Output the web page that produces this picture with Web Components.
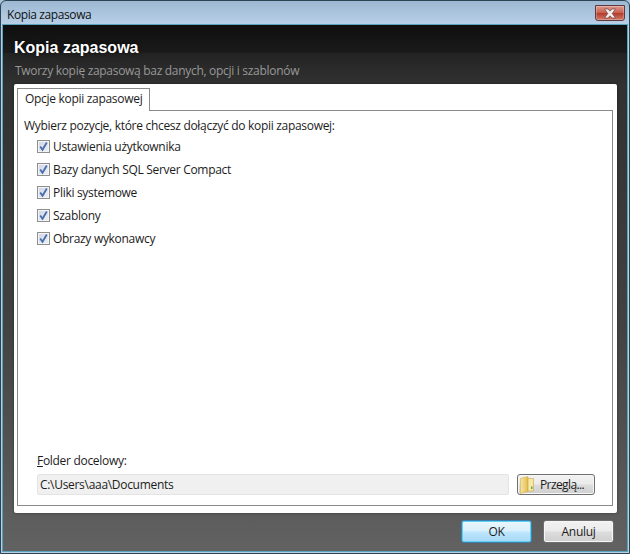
<!DOCTYPE html>
<html lang="pl">
<head>
<meta charset="utf-8">
<title>Kopia zapasowa</title>
<style>
  html, body { margin: 0; height: 100%; background: #a9c4dc; }
  body { font: 12px "Open Sans", "Liberation Sans", sans-serif; color: #1c1c1c; letter-spacing: -0.3px; }
</style>
</head>
<body>
<backup-window>
  <span slot="title">Kopia zapasowa</span>
  <span slot="heading">Kopia zapasowa</span>
  <span slot="subheading">Tworzy kopię zapasową baz danych, opcji i szablonów</span>
  <tab-panel label="Opcje kopii zapasowej">
    <div slot="intro">Wybierz pozycje, które chcesz dołączyć do kopii zapasowej:</div>
    <check-row>Ustawienia użytkownika</check-row>
    <check-row>Bazy danych SQL Server Compact</check-row>
    <check-row>Pliki systemowe</check-row>
    <check-row>Szablony</check-row>
    <check-row>Obrazy wykonawcy</check-row>
    <folder-field slot="footer" path="C:\Users\aaa\Documents"></folder-field>
  </tab-panel>
  <aero-button slot="actions" class="wide" focused>OK</aero-button>
  <aero-button slot="actions" class="wide">Anuluj</aero-button>
</backup-window>

<script>
class BackupWindow extends HTMLElement {
  connectedCallback() {
    this.attachShadow({ mode: 'open' });
    this.shadowRoot.innerHTML = `
      <style>
        :host {
          display: flex;
          flex-direction: column;
          box-sizing: border-box;
          width: 630px;
          height: 554px;
          border: 1px solid #2c4452;
          border-radius: 6px 6px 0 0;
          background: linear-gradient(#9db8d2, #b6cfe7 22px);
          overflow: hidden;
        }
        .titlebar {
          display: flex;
          align-items: flex-start;
          justify-content: space-between;
          height: 24px;
          flex: none;
          padding: 0 4px 0 6px;
          box-sizing: border-box;
        }
        .titlebar .name { line-height: 28px; color: #111; letter-spacing: -0.4px; }
        .close {
          width: 30px;
          height: 16px;
          margin-top: 4px;
          box-sizing: border-box;
          border: 1px solid #5c3a3e;
          border-radius: 0 0 3px 3px;
          background: linear-gradient(#dd9a8e, #c9604f 48%, #b23c2c 52%, #d2796a);
          display: flex;
          align-items: center;
          justify-content: center;
          box-shadow: inset 0 0 0 1px rgba(255,255,255,.25);
        }
        .body {
          flex: 1;
          display: flex;
          flex-direction: column;
          margin: 0 2px 2px 2px;
          padding: 0 10px 0 11px;
          outline: 1px solid #5aa2bc;
          background:
            linear-gradient(rgba(255,255,255,.035), rgba(255,255,255,.035)) 0 28px / 100% 100% no-repeat,
            linear-gradient(#0e0e0e, #2a2a2a 60px, #3b3b3b 300px, #5c5c5c);
        }
        .heading {
          font: bold 16px/20px "Liberation Sans", sans-serif;
          letter-spacing: 0;
          color: #fff;
          padding: 13px 0 0 0;
          text-shadow: 0 0 4px rgba(0,0,0,.8);
        }
        .sub {
          color: #989898;
          line-height: 17px;
          padding: 4px 0 0 1px;
          height: 22px;
        }
        .main { flex: 1; min-height: 0; display: flex; }
        .actions {
          display: flex;
          justify-content: flex-end;
          gap: 11px;
          padding: 7px 3px 8px 0;
          flex: none;
        }
      </style>
      <div class="titlebar">
        <span class="name"><slot name="title"></slot></span>
        <div class="close">
          <svg width="16" height="11" viewBox="0 0 16 11">
            <path d="M2.500 1h3.500l2 2.200L10 1h3.500L10.200 5.500 13.500 10H10L8 7.800 6 10H2.500L5.800 5.500z" fill="#f6f1f1" stroke="#6a4444" stroke-width=".7"/>
          </svg>
        </div>
      </div>
      <div class="body">
        <div class="heading"><slot name="heading"></slot></div>
        <div class="sub"><slot name="subheading"></slot></div>
        <div class="main"><slot></slot></div>
        <div class="actions"><slot name="actions"></slot></div>
      </div>
    `;
  }
}

class TabPanel extends HTMLElement {
  connectedCallback() {
    const label = this.getAttribute('label');
    this.attachShadow({ mode: 'open' });
    this.shadowRoot.innerHTML = `
      <style>
        :host {
          display: flex;
          flex-direction: column;
          flex: 1;
          background: #fff;
          padding: 4px 4px 7px 3px;
          border-radius: 2px;
          box-shadow: 0 0 3px rgba(0,0,0,.4);
        }
        .tab {
          align-self: flex-start;
          box-sizing: border-box;
          height: 23px;
          padding: 0 7px;
          line-height: 20px;
          border: 1px solid #8a8a8a;
          border-bottom: 0;
          background: #fff;
          position: relative;
          margin-bottom: -1px;
          z-index: 1;
        }
        .page {
          flex: 1;
          display: flex;
          flex-direction: column;
          border: 1px solid #8a8a8a;
          padding: 6px 6px 10px 6px;
        }
        .list { display: flex; flex-direction: column; gap: 6px; padding: 4px 0 0 13px; }
        .spacer { flex: 1; }
      </style>
      <div class="tab">${label}</div>
      <div class="page">
        <slot name="intro"></slot>
        <div class="list"><slot></slot></div>
        <div class="spacer"></div>
        <slot name="footer"></slot>
      </div>
    `;
  }
}

class CheckRow extends HTMLElement {
  connectedCallback() {
    this.attachShadow({ mode: 'open' });
    this.shadowRoot.innerHTML = `
      <style>
        :host { display: flex; align-items: center; gap: 3px; height: 17px; }
        .box {
          width: 13px;
          height: 13px;
          box-sizing: border-box;
          flex: none;
          border: 1px solid #8e8f8f;
          background: linear-gradient(135deg, #cfd6e2, #eef1f6);
          box-shadow: inset 0 0 0 1px #f4f4f4;
          display: flex;
          align-items: center;
          justify-content: center;
        }
      </style>
      <span class="box">
        <svg width="11" height="11" viewBox="0 0 11 11">
          <path d="M2.200 5.500 4.500 8.800 8.800 1.500" fill="none" stroke="#4a6cb0" stroke-width="1.800"/>
        </svg>
      </span>
      <slot></slot>
    `;
  }
}

class AeroButton extends HTMLElement {
  connectedCallback() {
    const focused = this.hasAttribute('focused');
    this.attachShadow({ mode: 'open' });
    this.shadowRoot.innerHTML = `
      <style>
        :host {
          display: inline-flex;
          align-items: center;
          justify-content: center;
          gap: 5px;
          box-sizing: border-box;
          height: 23px;
          width: ${this.classList.contains('wide') ? '71px' : '78px'};
          border: 1px solid ${focused ? '#3c7fb1' : '#707070'};
          border-radius: 3px;
          color: #1c1c1c;
          background: ${focused
            ? 'linear-gradient(#eaf6fd, #d9f0fc 48%, #bee6fd 52%, #a7d9f5)'
            : 'linear-gradient(#f2f2f2, #ebebeb 48%, #dddddd 52%, #cfcfcf)'};
          box-shadow: inset 0 0 0 1px ${focused ? '#5fd0f2' : '#f6f6f6'};
        }
      </style>
      <slot></slot>
    `;
  }
}

class FolderField extends HTMLElement {
  connectedCallback() {
    const path = this.getAttribute('path');
    this.attachShadow({ mode: 'open' });
    this.shadowRoot.innerHTML = `
      <style>
        :host { display: block; padding: 0 11px 0 13px; }
        .label { line-height: 17px; margin-bottom: 5px; }
        .label u { text-underline-offset: 1px; }
        .row { display: flex; gap: 8px; }
        .path {
          flex: 1;
          box-sizing: border-box;
          height: 21px;
          line-height: 19px;
          padding-left: 2px;
          border: 1px solid #e4e4e4;
          border-radius: 2px;
          background: #f0f0f0;
        }
        aero-button { height: 21px; justify-content: flex-start; padding-left: 2px; }
        aero-button span { letter-spacing: -0.6px; }
      </style>
      <div class="label"><u>F</u>older docelowy:</div>
      <div class="row">
        <div class="path">${path}</div>
        <aero-button>
          <svg width="15" height="18" viewBox="0 0 15 18">
            <defs>
              <linearGradient id="leaf" x1="0" x2="1" y1="0" y2="0">
                <stop offset="0" stop-color="#f6e6a4"/>
                <stop offset="1" stop-color="#e5bd52"/>
              </linearGradient>
            </defs>
            <path d="M.5 2.500 8 .5v15l-7.500 2z" fill="url(#leaf)" stroke="#d2b04c" stroke-width=".6"/>
            <path d="M8 2.500h5.500v12.500H8z" fill="#f7e8a6" stroke="#c9a640" stroke-width=".6"/>
            <path d="M11 10.500h1.500V13H11z" fill="#5fa85a"/>
          </svg>
          <span>Przeglą...</span>
        </aero-button>
      </div>
    `;
  }
}

customElements.define('backup-window', BackupWindow);
customElements.define('tab-panel', TabPanel);
customElements.define('check-row', CheckRow);
customElements.define('aero-button', AeroButton);
customElements.define('folder-field', FolderField);
</script>
</body>
</html>
